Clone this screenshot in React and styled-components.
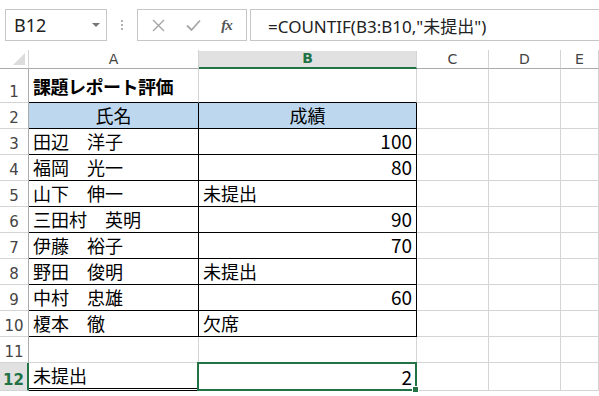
import React from 'react';
import styled, { createGlobalStyle } from 'styled-components';

const GREEN = '#217346';
const GRID = '#d4d4d4';

const GlobalStyle = createGlobalStyle`
  html, body {
    margin: 0;
    padding: 0;
    background: #fff;
  }
  body {
    font-family: "Noto Sans CJK JP", sans-serif;
  }
`;

const Page = styled.div`
  width: 599px;
  height: 396px;
  overflow: hidden;
  background: #fff;
`;

const FormulaBar = styled.div`
  display: flex;
  align-items: stretch;
  height: 32px;
  padding: 9px 0 0 5px;
`;

const NameBox = styled.div`
  box-sizing: border-box;
  width: 102px;
  display: flex;
  align-items: center;
  justify-content: space-between;
  padding: 0 6px 0 8px;
  border: 1px solid #c6c6c6;
  font-family: "Noto Sans", sans-serif;
  font-size: 18px;
  color: #222;
`;

const DropArrow = styled.span`
  width: 0;
  height: 0;
  border-left: 4px solid transparent;
  border-right: 4px solid transparent;
  border-top: 4px solid #777;
`;

const Dots = styled.div`
  width: 30px;
  display: flex;
  flex-direction: column;
  align-items: center;
  justify-content: center;
  gap: 2px;
  span {
    width: 2px;
    height: 2px;
    background: #b0b0b0;
  }
`;

const FxBox = styled.div`
  box-sizing: border-box;
  width: 110px;
  display: flex;
  align-items: center;
  justify-content: space-around;
  padding: 0 4px;
  border: 1px solid #c6c6c6;
`;

const FxLabel = styled.span`
  font-family: "Liberation Serif", serif;
  font-style: italic;
  font-weight: bold;
  font-size: 15px;
  color: #555;
  letter-spacing: -1px;
`;

const FormulaInput = styled.div`
  box-sizing: border-box;
  flex: 1;
  margin-left: 3px;
  margin-right: -10px;
  display: flex;
  align-items: center;
  padding-left: 17px;
  border: 1px solid #c6c6c6;
  font-family: "Noto Sans", "Noto Sans CJK JP", sans-serif;
  font-size: 17px;
  color: #222;
  white-space: nowrap;
`;

const Sheet = styled.div`
  margin-top: 9px;
  display: grid;
  grid-template-columns: 29px 170px 218px 72px 72px 1fr;
  grid-template-rows: 19px 34px repeat(10, 26px) 28px;
`;

const Corner = styled.div`
  box-sizing: border-box;
  position: relative;
  border-right: 1px solid ${GRID};
  border-bottom: 1px solid #ababab;
  &::after {
    content: '';
    position: absolute;
    right: 3px;
    bottom: 3px;
    width: 0;
    height: 0;
    border-left: 12px solid transparent;
    border-bottom: 12px solid #dcdcdc;
  }
`;

const ColHead = styled.div`
  box-sizing: border-box;
  display: flex;
  align-items: flex-end;
  justify-content: center;
  padding-bottom: 1px;
  font-family: "DejaVu Sans", sans-serif;
  font-size: 14px;
  line-height: 16px;
  color: ${p => (p.$active ? GREEN : '#444')};
  font-weight: ${p => (p.$active ? 'bold' : 'normal')};
  background: ${p => (p.$active ? '#e1e1e1' : '#fff')};
  border-right: 1px solid ${GRID};
  border-bottom: ${p => (p.$active ? `2px solid ${GREEN}` : '1px solid #ababab')};
  margin-top: ${p => (p.$active ? '1px' : '0')};
`;

const RowHead = styled.div`
  box-sizing: border-box;
  display: flex;
  align-items: flex-end;
  justify-content: center;
  padding-bottom: 1px;
  font-family: "DejaVu Sans", sans-serif;
  font-size: 15px;
  line-height: 17px;
  color: ${p => (p.$active ? GREEN : '#444')};
  font-weight: ${p => (p.$active ? 'bold' : 'normal')};
  background: ${p => (p.$active ? '#e1e1e1' : '#fff')};
  border-right: ${p => (p.$active ? `2px solid ${GREEN}` : '1px solid #ababab')};
  border-bottom: 1px solid ${GRID};
`;

const Cell = styled.div`
  box-sizing: border-box;
  position: relative;
  display: flex;
  align-items: flex-end;
  justify-content: ${p => ({ left: 'flex-start', right: 'flex-end', center: 'center' }[p.$align || 'left'])};
  padding: 0 4px ${p => (p.$bold ? '5px' : p.$numeric ? '3px' : '2px')} 4px;
  font-size: ${p => (p.$numeric ? '19px' : '18px')};
  line-height: ${p => (p.$numeric ? '20px' : '22px')};
  color: #000;
  white-space: nowrap;
  font-weight: ${p => (p.$bold ? 'bold' : 'normal')};
  letter-spacing: ${p => (p.$bold ? '-0.5px' : '0')};
  background: ${p => p.$fill || '#fff'};
  border-right: 1px solid ${p => (p.$boxed ? '#000' : GRID)};
  border-bottom: ${p => (p.$double ? '3px double #000' : `1px solid ${p.$boxed || p.$topEdge ? '#000' : GRID}`)};
  ${p => p.$selected && `
    &::after {
      content: '';
      position: absolute;
      top: -1px;
      left: -2px;
      right: -1px;
      bottom: -1px;
      border: 2px solid ${GREEN};
    }
    &::before {
      content: '';
      position: absolute;
      right: -3px;
      bottom: -3px;
      width: 5px;
      height: 5px;
      background: ${GREEN};
      border: 1px solid #fff;
      z-index: 1;
    }
  `}
`;

const CancelIcon = () => (
  <svg width="13" height="13" viewBox="0 0 13 13">
    <path d="M1 1L12 12M12 1L1 12" stroke="#a6a6a6" strokeWidth="1.4" fill="none" />
  </svg>
);

const EnterIcon = () => (
  <svg width="15" height="13" viewBox="0 0 15 13">
    <path d="M1 6.5L5.5 11L14 1.5" stroke="#a6a6a6" strokeWidth="1.8" fill="none" />
  </svg>
);

const rows = [
  { a: '課題レポート評価', b: '', title: true },
  { a: '氏名', b: '成績', header: true },
  { a: '田辺　洋子', b: '100' },
  { a: '福岡　光一', b: '80' },
  { a: '山下　伸一', b: '未提出' },
  { a: '三田村　英明', b: '90' },
  { a: '伊藤　裕子', b: '70' },
  { a: '野田　俊明', b: '未提出' },
  { a: '中村　忠雄', b: '60' },
  { a: '榎本　徹', b: '欠席' },
  { a: '', b: '', blank: true },
  { a: '未提出', b: '2', result: true },
];

const isNumber = v => /^\d+$/.test(v);

export default function App() {
  return (
    <Page>
      <GlobalStyle />
      <FormulaBar>
        <NameBox>
          B12
          <DropArrow />
        </NameBox>
        <Dots>
          <span />
          <span />
          <span />
        </Dots>
        <FxBox>
          <CancelIcon />
          <EnterIcon />
          <FxLabel>fx</FxLabel>
        </FxBox>
        <FormulaInput>=COUNTIF(B3:B10,"未提出")</FormulaInput>
      </FormulaBar>

      <Sheet>
        <Corner />
        <ColHead>A</ColHead>
        <ColHead $active>B</ColHead>
        <ColHead>C</ColHead>
        <ColHead>D</ColHead>
        <ColHead>E</ColHead>

        {rows.map((r, i) => {
          const n = i + 1;
          const boxed = !r.title && !r.blank && !r.result;
          const fill = r.header ? '#bdd7ee' : undefined;
          return (
            <React.Fragment key={n}>
              <RowHead $active={r.result}>{n}</RowHead>
              <Cell
                $bold={r.title}
                $boxed={boxed}
                $topEdge={r.title}
                $fill={fill}
                $align={r.header ? 'center' : 'left'}
                $double={r.result}
              >
                {r.a}
              </Cell>
              <Cell
                $boxed={boxed}
                $topEdge={r.title}
                $fill={fill}
                $numeric={isNumber(r.b)}
                $align={r.header ? 'center' : isNumber(r.b) ? 'right' : 'left'}
                $selected={r.result}
              >
                {r.b}
              </Cell>
              <Cell />
              <Cell />
              <Cell />
            </React.Fragment>
          );
        })}
      </Sheet>
    </Page>
  );
}
